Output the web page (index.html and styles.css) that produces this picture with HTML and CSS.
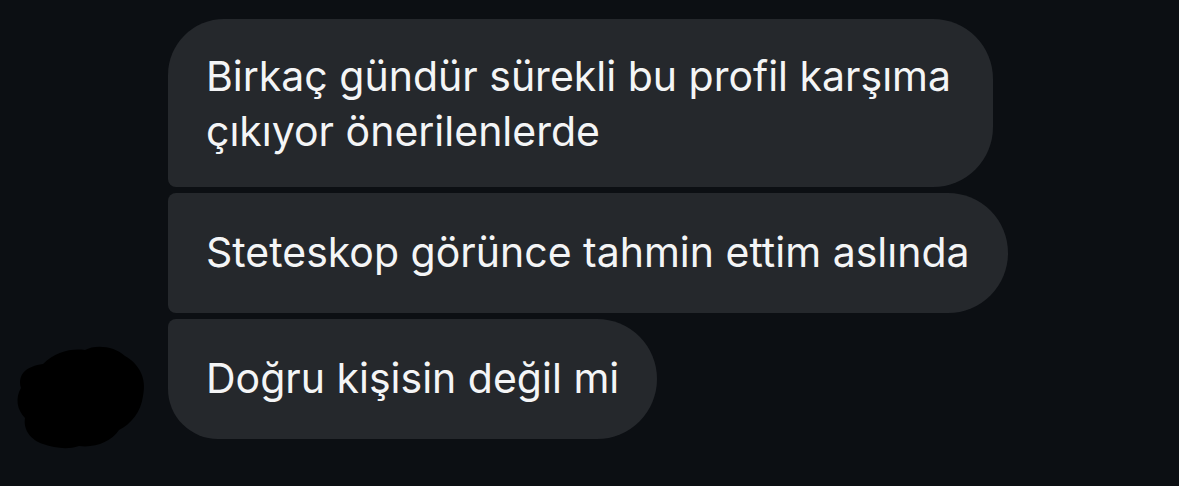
FILE: index.html
```html
<!DOCTYPE html>
<html lang="tr">
<head>
<meta charset="utf-8">
<link rel="stylesheet" href="styles.css">
</head>
<body>
<div class="thread">
  <div class="group">
    <div class="avatar">
      <svg width="132" height="108" viewBox="0 0 132 108">
        <path d="M6 44 C2 30 12 22 28 20 C40 8 56 4 70 6 C80 0 100 2 110 12 C124 20 132 34 128 52 C126 68 116 80 104 86 C96 98 80 104 64 102 C52 106 40 104 28 100 C16 96 8 86 10 74 C2 66 0 54 6 44 Z" fill="#000"/>
      </svg>
    </div>
    <div class="bubbles">
      <div class="bubble first wide">Birkaç gündür sürekli bu profil karşıma çıkıyor önerilenlerde</div>
      <div class="bubble middle">Steteskop görünce tahmin ettim aslında</div>
      <div class="bubble last">Doğru kişisin değil mi</div>
    </div>
  </div>
</div>
</body>
</html>
```
FILE: styles.css
```css
html, body {
  margin: 0;
  padding: 0;
  background: #0c0f13;
}
body {
  width: 1179px;
  height: 486px;
  overflow: hidden;
  font-family: Inter, "Liberation Sans", sans-serif;
}
.thread {
  padding: 19px 0 0 0;
}
.group {
  display: flex;
  align-items: flex-end;
}
.avatar {
  width: 168px;
  flex: none;
  display: flex;
  padding-left: 15px;
  box-sizing: border-box;
  margin-bottom: -13px;
}
.bubbles {
  display: flex;
  flex-direction: column;
  align-items: flex-start;
  gap: 6px;
}
.bubble {
  background: #25282c;
  color: #f4f5f6;
  font-size: 41px;
  line-height: 53px;
  padding: 33px 38px 34px 38px;
  border-radius: 8px 60px 60px 8px;
  box-sizing: border-box;
  white-space: nowrap;
}
.bubble.wide {
  width: 825px;
  line-height: 55px;
  padding-top: 30px;
  padding-bottom: 28px;
  padding-right: 20px;
  white-space: normal;
}
.bubble.first {
  border-top-left-radius: 56px;
}
.bubble.last {
  border-bottom-left-radius: 50px;
}
```
